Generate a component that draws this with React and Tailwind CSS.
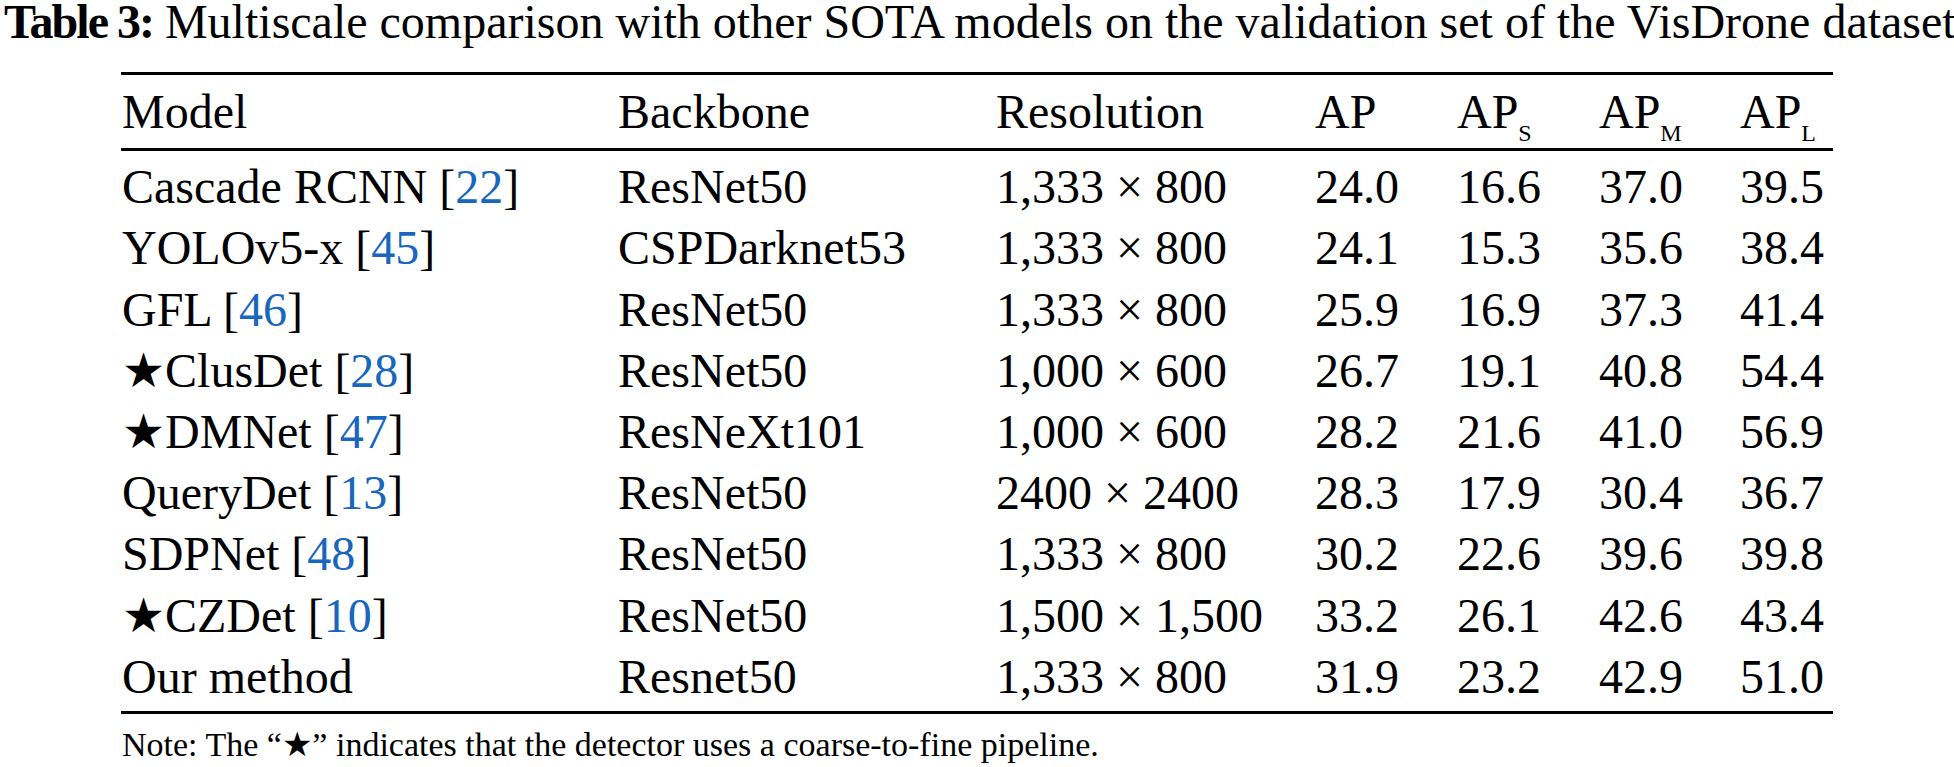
const rows = [
  { star: false, name: 'Cascade RCNN', ref: '22', backbone: 'ResNet50', res: '1,333 × 800', ap: '24.0', s: '16.6', m: '37.0', l: '39.5' },
  { star: false, name: 'YOLOv5-x', ref: '45', backbone: 'CSPDarknet53', res: '1,333 × 800', ap: '24.1', s: '15.3', m: '35.6', l: '38.4' },
  { star: false, name: 'GFL', ref: '46', backbone: 'ResNet50', res: '1,333 × 800', ap: '25.9', s: '16.9', m: '37.3', l: '41.4' },
  { star: true, name: 'ClusDet', ref: '28', backbone: 'ResNet50', res: '1,000 × 600', ap: '26.7', s: '19.1', m: '40.8', l: '54.4' },
  { star: true, name: 'DMNet', ref: '47', backbone: 'ResNeXt101', res: '1,000 × 600', ap: '28.2', s: '21.6', m: '41.0', l: '56.9' },
  { star: false, name: 'QueryDet', ref: '13', backbone: 'ResNet50', res: '2400 × 2400', ap: '28.3', s: '17.9', m: '30.4', l: '36.7' },
  { star: false, name: 'SDPNet', ref: '48', backbone: 'ResNet50', res: '1,333 × 800', ap: '30.2', s: '22.6', m: '39.6', l: '39.8' },
  { star: true, name: 'CZDet', ref: '10', backbone: 'ResNet50', res: '1,500 × 1,500', ap: '33.2', s: '26.1', m: '42.6', l: '43.4' },
  { star: false, name: 'Our method', ref: null, backbone: 'Resnet50', res: '1,333 × 800', ap: '31.9', s: '23.2', m: '42.9', l: '51.0' },
];

function Star() {
  return <span className="font-['DejaVu_Sans',sans-serif]">★</span>;
}

function Row({ children }) {
  return <div className="flex h-[61.2px] leading-[61px] whitespace-nowrap">{children}</div>;
}

function Sub({ children }) {
  return <sub className="text-[24px] relative top-[2px] align-sub leading-none">{children}</sub>;
}

export default function App() {
  return (
    <div className="bg-white text-black w-[1954px] h-[767px] overflow-hidden font-['Liberation_Serif','Times_New_Roman',serif]">
      {/* Caption */}
      <div className="pl-[4px] text-[48px] leading-[44px] h-[44px] whitespace-nowrap">
        <b className="tracking-[-2px]">Table 3:</b> Multiscale comparison with other SOTA models on the validation set of the VisDrone dataset
      </div>

      <div className="ml-[121px] w-[1712px] mt-[28px] text-[48px]">
        <div className="h-[3px] bg-black" />

        {/* Header */}
        <div className="mt-[6px]">
          <Row>
            <div className="w-[497px] pl-[1px]">Model</div>
            <div className="w-[378px]">Backbone</div>
            <div className="w-[319px]">Resolution</div>
            <div className="w-[142px]">AP</div>
            <div className="w-[142px]">AP<Sub>S</Sub></div>
            <div className="w-[141px]">AP<Sub>M</Sub></div>
            <div>AP<Sub>L</Sub></div>
          </Row>
        </div>

        <div className="mt-[6px] h-[3px] bg-black" />

        {/* Body */}
        <div className="mt-[5px]">
          {rows.map((r) => (
            <Row key={r.name}>
              <div className="w-[497px] pl-[1px]">
                {r.star && <Star />}
                {r.name}
                {r.ref && (
                  <>
                    {' '}[<span className="text-[#1866bd]">{r.ref}</span>]
                  </>
                )}
              </div>
              <div className="w-[378px]">{r.backbone}</div>
              <div className="w-[319px]">{r.res}</div>
              <div className="w-[142px]">{r.ap}</div>
              <div className="w-[142px]">{r.s}</div>
              <div className="w-[141px]">{r.m}</div>
              <div>{r.l}</div>
            </Row>
          ))}
        </div>

        <div className="mt-[4px] h-[3px] bg-black" />

        {/* Note */}
        <div className="mt-[13px] text-[34px] leading-[34px] whitespace-nowrap pl-[1px]">
          Note: The “<Star />” indicates that the detector uses a coarse-to-fine pipeline.
        </div>
      </div>
    </div>
  );
}
